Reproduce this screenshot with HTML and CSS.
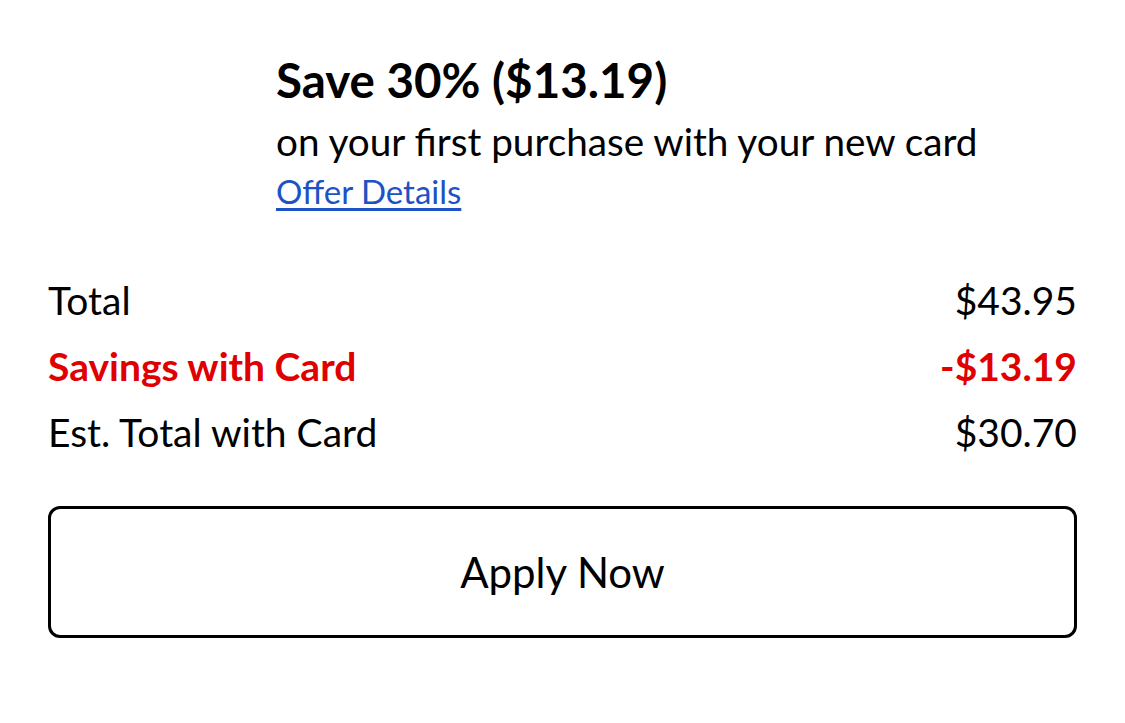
FILE: index.html
```html
<!DOCTYPE html>
<html>
<head>
<meta charset="utf-8">
<link rel="stylesheet" href="styles.css">
</head>
<body>
<div class="page">
  <div class="offer">
    <div class="offer-title">Save 30% ($13.19)</div>
    <div class="offer-sub">on your first purchase with your new card</div>
    <a class="offer-link" href="#">Offer Details</a>
  </div>
  <div class="rows">
    <div class="row"><span>Total</span><span>$43.95</span></div>
    <div class="row savings"><span>Savings with Card</span><span>-$13.19</span></div>
    <div class="row"><span>Est. Total with Card</span><span>$30.70</span></div>
  </div>
  <button class="apply">Apply Now</button>
</div>
</body>
</html>
```
FILE: styles.css
```css
html, body {
  margin: 0;
  padding: 0;
  background: #ffffff;
}
body {
  font-family: Lato, "Noto Sans", sans-serif;
  color: #000;
}
.page {
  padding: 47px 48px 0 48px;
  display: flex;
  flex-direction: column;
}
.offer {
  padding-left: 228px;
  display: flex;
  flex-direction: column;
  align-items: flex-start;
}
.offer-title {
  font-weight: 700;
  font-size: 47.5px;
  line-height: 66px;
}
.offer-sub {
  font-size: 38.7px;
  line-height: 56px;
}
.offer-link {
  font-size: 33px;
  line-height: 44px;
  color: #1c52c5;
  text-decoration: underline;
  text-underline-offset: 4px;
}
.rows {
  margin-top: 63px;
  display: flex;
  flex-direction: column;
  gap: 18px;
}
.row {
  display: flex;
  justify-content: space-between;
  font-size: 39px;
  line-height: 48px;
}
.row.savings {
  color: #e00000;
  font-weight: 700;
}
.apply {
  margin-top: 50px;
  height: 132px;
  border: 3px solid #000;
  border-radius: 12px;
  background: #fff;
  font-family: Lato, "Noto Sans", sans-serif;
  font-size: 42px;
  color: #000;
}
```
